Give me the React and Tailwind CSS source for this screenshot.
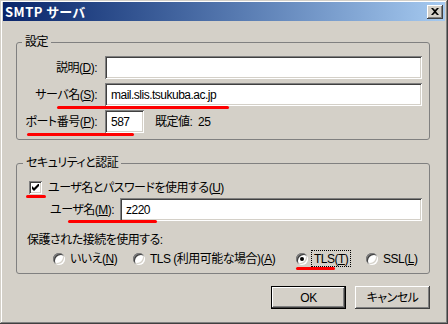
import React from "react";

const sunken =
  "shadow-[inset_1px_1px_#808080,inset_-1px_-1px_#ffffff,inset_2px_2px_#404040,inset_-2px_-2px_#d4d0c8]";
const raised =
  "shadow-[inset_-1px_-1px_#404040,inset_1px_1px_#ffffff,inset_-2px_-2px_#808080,inset_2px_2px_#d4d0c8]";

function Key({ children }) {
  return <span className="underline underline-offset-[1px]">{children}</span>;
}

function Field({ value, className = "" }) {
  return (
    <div className={`h-[23px] bg-white ${sunken} pl-[6px] flex items-center ${className}`}>
      <span className="leading-[14px]">{value}</span>
    </div>
  );
}

function Radio({ checked }) {
  return (
    <span className={`w-[12px] h-[12px] shrink-0 rounded-full bg-white ${sunken} flex items-center justify-center`}>
      {checked && <span className="w-[4px] h-[4px] rounded-full bg-black" />}
    </span>
  );
}

function Checkbox() {
  return (
    <span className={`w-[13px] h-[13px] shrink-0 bg-white ${sunken} flex items-center justify-center`}>
      <svg width="7" height="7" viewBox="0 0 7 7">
        <polygon points="0,2 2,4 7,-1 7,2 2,7 0,5" fill="#000" />
      </svg>
    </span>
  );
}

function Group({ title, titleLeft, className = "", children }) {
  return (
    <div className={`relative ml-[16px] w-[414px] border border-[#808080] rounded-[3px] ${className}`}>
      <span className={`absolute -top-[8px] ${titleLeft} bg-[#d4d0c8] px-[3px] leading-[14px]`}>{title}</span>
      {children}
    </div>
  );
}

export default function App() {
  return (
    <div className="relative w-[448px] h-[324px] bg-[#d4d0c8] shadow-[inset_-1px_-1px_#404040,inset_1px_1px_#d4d0c8,inset_-2px_-2px_#808080,inset_2px_2px_#ffffff] flex flex-col text-[12px] tracking-[-0.5px] text-black font-['Liberation_Sans','Noto_Sans_CJK_JP',sans-serif] [font-feature-settings:'palt'] overflow-hidden">
      {/* title bar */}
      <div className="mt-[2px] mx-[3px] h-[19px] bg-gradient-to-r from-[#0a246a] to-[#a6caf0] flex items-center justify-between pl-[2px] pr-[2px]">
        <span className="text-white font-bold text-[13px] tracking-[0.5px] leading-[14px] font-['Noto_Sans_CJK_JP',sans-serif]">SMTP サーバ</span>
        <span className={`w-[16px] h-[14px] bg-[#d4d0c8] ${raised} flex items-center justify-center`}>
          <svg width="8" height="7" viewBox="0 0 8 7">
            <path d="M0 0h2l2 2 2-2h2L5 3.5 8 7H6L4 5 2 7H0l3-3.5z" fill="#000" />
          </svg>
        </span>
      </div>

      {/* 設定 */}
      <Group title="設定" titleLeft="left-[5px]" className="mt-[21px] pt-[13px] pb-[6px] pr-[7px]">
        <div className="flex flex-col gap-[4px]">
          <div className="flex items-center">
            <span className="w-[80px] text-right leading-[14px]">説明(<Key>D</Key>):</span>
            <Field value="" className="ml-[8px] w-[317px]" />
          </div>
          <div className="flex items-center">
            <span className="w-[80px] text-right leading-[14px]">サーバ名(<Key>S</Key>):</span>
            <Field value="mail.slis.tsukuba.ac.jp" className="ml-[8px] w-[317px]" />
          </div>
          <div className="flex items-center">
            <span className="w-[80px] text-right leading-[14px] whitespace-nowrap">ポート番号(<Key>P</Key>):</span>
            <Field value="587" className="ml-[8px] w-[39px]" />
            <span className="ml-[11px] leading-[14px]">既定値:&nbsp;&nbsp;25</span>
          </div>
        </div>
      </Group>

      {/* セキュリティと認証 */}
      <Group title="セキュリティと認証" titleLeft="left-[6px]" className="mt-[23px] pt-[17px] pb-[6px] pr-[7px]">
        <div className="flex items-center h-[13px] pl-[12px]">
          <Checkbox />
          <span className="ml-[6px] leading-[14px]">ユーザ名とパスワードを使用する(<Key>U</Key>)</span>
        </div>
        <div className="flex items-center mt-[4px] pl-[33px]">
          <span className="leading-[14px]">ユーザ名(<Key>M</Key>):</span>
          <Field value="z220" className="ml-auto w-[302px]" />
        </div>
        <div className="mt-[12px] pl-[10px] leading-[14px]">保護された接続を使用する:</div>
        <div className="mt-[3px] h-[17px] flex items-center pl-[36px]">
          <span className="w-[80px] flex items-center">
            <Radio />
            <span className="ml-[5px] leading-[14px]">いいえ(<Key>N</Key>)</span>
          </span>
          <span className="w-[163px] flex items-center">
            <Radio />
            <span className="ml-[5px] leading-[14px] whitespace-nowrap">TLS (利用可能な場合)(<Key>A</Key>)</span>
          </span>
          <span className="w-[70px] flex items-center">
            <Radio checked />
            <span className="ml-[3px] h-[17px] px-[2px] border border-dotted border-black flex items-center leading-[14px]">
              TLS(<Key>T</Key>)
            </span>
          </span>
          <span className="flex items-center">
            <Radio />
            <span className="ml-[5px] leading-[14px]">SSL(<Key>L</Key>)</span>
          </span>
        </div>
      </Group>

      {/* buttons */}
      <div className="mt-[12px] mr-[18px] flex justify-end gap-[9px]">
        <button className="w-[75px] h-[23px] border border-black bg-[#d4d0c8] p-0">
          <span className={`w-full h-full flex items-center justify-center ${raised} leading-[14px]`}>OK</span>
        </button>
        <button className={`w-[75px] h-[23px] bg-[#d4d0c8] ${raised} flex items-center justify-center leading-[14px]`}>
          キャンセル
        </button>
      </div>

      {/* red annotation marks */}
      <span className="absolute left-[57px] top-[106px] w-[172px] h-[3px] rounded-full bg-[#ff0000]" />
      <span className="absolute left-[27px] top-[133px] w-[107px] h-[3px] rounded-full bg-[#ff0000]" />
      <span className="absolute left-[26px] top-[195px] w-[20px] h-[3px] rounded-full bg-[#ff0000]" />
      <span className="absolute left-[68px] top-[220px] w-[89px] h-[3px] rounded-full bg-[#ff0000]" />
      <span className="absolute left-[296px] top-[267px] w-[39px] h-[3px] rounded-full bg-[#ff0000]" />
    </div>
  );
}
